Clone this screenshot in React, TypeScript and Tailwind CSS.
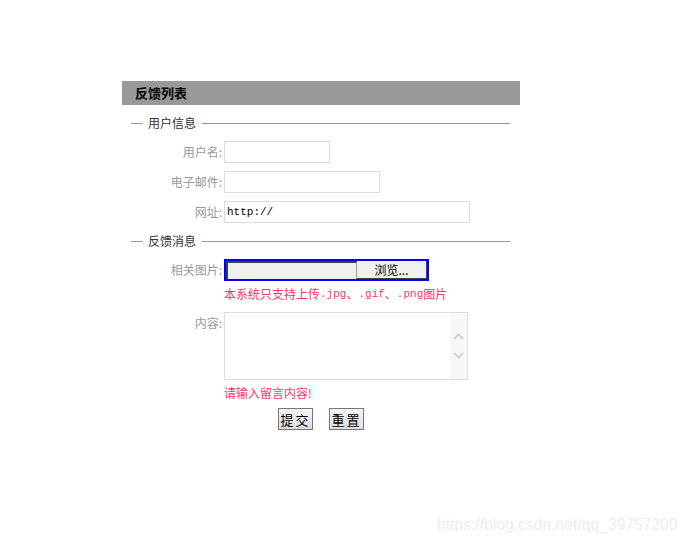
import React from 'react';

const cn = '"Noto Sans CJK SC", "Liberation Sans", sans-serif';
const mono = '"Liberation Mono", monospace';

const Legend = ({ title }: { title: string }) => (
  <div className="flex items-center h-[18px] pl-[9px] pr-[10px]">
    <div className="w-[12px] h-px bg-[#999]" />
    <span className="ml-[5px] text-[12px] text-[#333] leading-none">{title}</span>
    <div className="ml-[6px] flex-1 h-px bg-[#999]" />
  </div>
);

const Label = ({ text }: { text: string }) => (
  <div className="w-[102px] shrink-0 text-right text-[12px] text-[#999] pr-[2px]">{text}</div>
);

const App = () => {
  return (
    <div className="relative h-[543px] w-[689px] bg-white" style={{ fontFamily: cn }}>
      <div className="ml-[122px] pt-[81px] w-[398px]">
        {/* header */}
        <div className="h-[24px] bg-[#999999] flex items-center pl-[13px]">
          <span className="text-[13px] font-bold text-black">反馈列表</span>
        </div>

        {/* user info */}
        <div className="mt-[9px]">
          <Legend title="用户信息" />
        </div>
        <div className="mt-[9px] flex flex-col gap-[8px]">
          <div className="flex items-center">
            <Label text="用户名:" />
            <input className="w-[106px] h-[22px] border border-[#ddd] outline-none" />
          </div>
          <div className="flex items-center">
            <Label text="电子邮件:" />
            <input className="w-[156px] h-[22px] border border-[#ddd] outline-none" />
          </div>
          <div className="flex items-center">
            <Label text="网址:" />
            <input
              defaultValue="http://"
              className="w-[246px] h-[22px] border border-[#ddd] outline-none px-[2px] text-[11px] text-black"
              style={{ fontFamily: mono }}
            />
          </div>
        </div>

        {/* feedback */}
        <div className="mt-[9px]">
          <Legend title="反馈消息" />
        </div>
        <div className="mt-[9px] flex items-center">
          <Label text="相关图片:" />
          <div className="flex w-[205px] h-[22px] border-2 border-[#0000ff]">
            <div className="w-[131px] h-full bg-[#f0f0f0] border-t-2 border-l-2 border-[#404040] border-r border-r-[#a0a0a0]" />
            <div className="flex-1 h-full bg-[#f0f0f0] border-r border-b border-[#404040] flex items-center justify-center text-[12px] text-black">
              浏览...
            </div>
          </div>
        </div>
        <div className="mt-[5px] ml-[102px] h-[16px] flex items-center text-[12px] text-[#ff3366] whitespace-nowrap">
          本系统只支持上传<span className="text-[11px]" style={{ fontFamily: mono }}>.jpg</span>、<span className="text-[11px]" style={{ fontFamily: mono }}>.gif</span>、<span className="text-[11px]" style={{ fontFamily: mono }}>.png</span>图片
        </div>

        <div className="mt-[10px] flex items-start">
          <div className="w-[102px] shrink-0 text-right text-[12px] text-[#999] pr-[2px] pt-[2px]">内容:</div>
          <div className="w-[244px] h-[68px] border border-[#ddd] flex">
            <div className="flex-1" />
            <div className="w-[17px] bg-[#f8f8f8] flex flex-col items-center justify-center gap-[12px]">
              <svg width="11" height="7" viewBox="0 0 11 7" fill="none">
                <path d="M1 6 L5.5 1.5 L10 6" stroke="#c8c8c8" strokeWidth="1.6" />
              </svg>
              <svg width="11" height="7" viewBox="0 0 11 7" fill="none">
                <path d="M1 1 L5.5 5.5 L10 1" stroke="#c8c8c8" strokeWidth="1.6" />
              </svg>
            </div>
          </div>
        </div>
        <div className="mt-[5px] ml-[102px] h-[16px] flex items-center text-[12px] text-[#ff3366]">
          请输入留言内容!
        </div>

        <div className="mt-[7px] ml-[156px] flex gap-[16px]">
          <button className="w-[35px] h-[22px] border border-[#777] bg-gradient-to-b from-[#f6f6f6] to-[#dcdcdc] text-[13px] text-black tracking-[2px] leading-none">
            提交
          </button>
          <button className="w-[35px] h-[22px] border border-[#777] bg-gradient-to-b from-[#f6f6f6] to-[#dcdcdc] text-[13px] text-black tracking-[2px] leading-none">
            重置
          </button>
        </div>
      </div>

      {/* watermark */}
      <div
        className="absolute left-[437px] top-[513px] text-[15.7px] text-[#ededed]"
        style={{ fontFamily: '"Liberation Sans", Arial, sans-serif' }}
      >
        https://blog.csdn.net/qq_39757209
      </div>
    </div>
  );
};

export default App;
